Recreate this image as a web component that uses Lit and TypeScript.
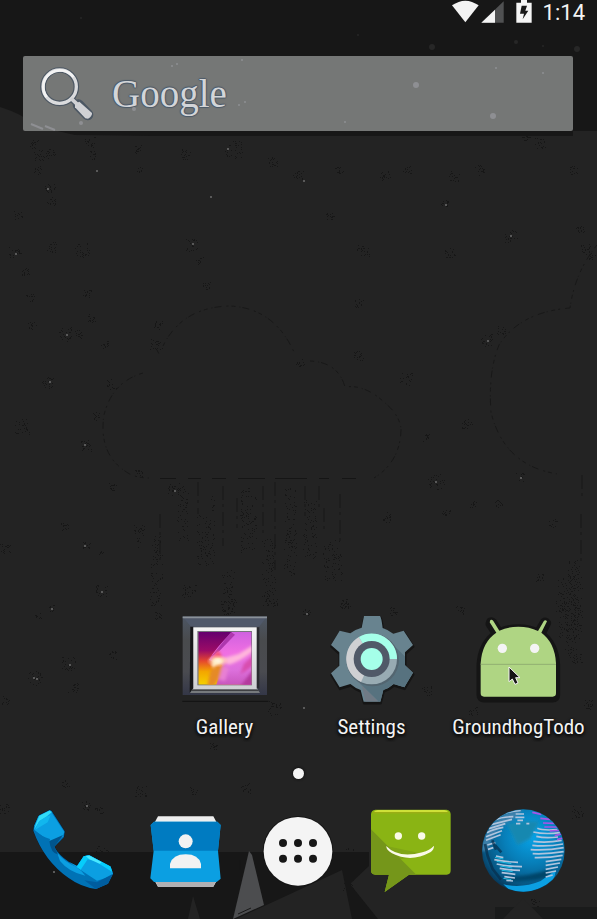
import { LitElement, html, css, svg } from "lit";
import { customElement } from "lit/decorators.js";

/* ---------- wallpaper data ---------- */

// [x, y, radius] of the dark grain clusters
const grain: number[][] = [
  [50, 189, 5], [51, 201, 4], [18, 215, 4], [15, 253, 6], [52, 247, 5], [82, 250, 7], [192, 245, 6], [199, 260, 4],
  [25, 272, 4], [30, 298, 4], [87, 293, 4], [206, 286, 4], [91, 318, 4], [32, 325, 4], [65, 334, 7], [78, 334, 4],
  [105, 344, 4], [158, 325, 4], [156, 345, 6], [48, 383, 6], [22, 426, 8], [85, 445, 6], [97, 416, 4], [111, 384, 5],
  [139, 473, 4], [112, 487, 4], [174, 489, 6], [65, 526, 4], [86, 545, 4], [5, 548, 5], [139, 530, 6], [101, 552, 2],
  [101, 590, 6], [51, 608, 3], [38, 615, 3], [158, 616, 4], [189, 591, 7], [112, 655, 4], [69, 664, 7], [35, 678, 7],
  [73, 688, 5], [5, 700, 4], [65, 784, 4], [141, 791, 6], [193, 791, 4], [86, 805, 5], [99, 811, 4], [4, 808, 5],
  [102, 851, 6], [34, 144, 4], [39, 155, 5], [51, 153, 5], [37, 170, 4], [93, 155, 4], [90, 142, 5], [139, 149, 4],
  [139, 170, 3], [186, 154, 5], [234, 149, 9], [272, 162, 5], [298, 175, 5], [339, 170, 4], [385, 176, 5], [407, 170, 4],
  [454, 176, 5], [480, 170, 5], [540, 143, 5], [573, 170, 4], [526, 137, 4], [300, 362, 4], [359, 356, 5], [406, 379, 6],
  [359, 303, 4], [386, 517, 5], [346, 604, 5], [393, 611, 4], [306, 613, 4], [445, 203, 4], [511, 236, 6], [580, 230, 4],
  [586, 249, 5], [592, 255, 4], [487, 340, 6], [501, 330, 4], [467, 424, 5], [426, 437, 4], [436, 481, 8], [520, 477, 4],
  [499, 504, 4], [473, 504, 3], [446, 511, 4], [553, 523, 4], [540, 577, 4], [460, 610, 4], [427, 691, 5], [587, 704, 5],
  [473, 711, 4], [272, 600, 6], [274, 708, 7], [213, 745, 4], [246, 788, 5], [349, 852, 4], [348, 885, 5], [577, 812, 6],
  [535, 903, 4], [229, 607, 8], [562, 606, 6], [575, 656, 7], [344, 605, 4], [450, 252, 5], [363, 250, 6], [330, 215, 4],
];

// [x, y, width, height] of the vertical streaks under the clouds
const rain: number[][] = [
  [150, 535, 12, 72], [177, 485, 11, 56], [197, 515, 18, 50], [211, 490, 4, 22], [222, 570, 13, 44], [240, 487, 16, 65],
  [262, 538, 13, 68], [284, 487, 12, 88], [303, 500, 13, 60], [323, 540, 19, 40], [558, 575, 24, 66], [565, 560, 14, 90],
  [137, 535, 5, 14],
];

const sparks: number[][] = [
  [47, 188], [15, 253], [66, 334], [49, 381], [84, 444], [84, 545], [101, 591], [51, 608], [69, 664], [33, 677],
  [36, 678], [174, 490], [192, 243], [210, 196], [227, 148], [510, 235], [445, 204], [487, 340], [435, 481],
  [520, 477], [306, 613], [303, 707], [86, 805], [53, 871], [96, 170], [303, 180],
];

const faint: number[][] = [
  [358, 35, 1], [432, 47, 3], [516, 42, 2], [543, 46, 1], [577, 49, 3], [81, 18, 1],
];

const speckle = (): string => {
  let seed = 11;
  const next = () => ((seed = (seed * 16807) % 2147483647) / 2147483647);
  let d = "";
  const dot = (x: number, y: number) => (d += `M${Math.round(x)} ${Math.round(y)}h1v1h-1z`);
  for (const [x, y, r] of grain) {
    for (let i = 0; i < r * 4; i++) dot(x + (next() * 2 - 1) * r, y + (next() * 2 - 1) * r);
  }
  for (const [x, y, w, h] of rain) {
    for (let i = 0; i < (w * h) / 10; i++) dot(x + next() * w, y + next() * h);
  }
  return d;
};

const wallpaper = svg`
  <svg class="wallpaper" viewBox="0 0 597 919" preserveAspectRatio="none" aria-hidden="true">
    <rect width="597" height="919" fill="#232323"/>
    <path d="M0 0H597V131H573V136H150L75 135Q40 128 20 115Q10 110 0 107Z" fill="#171717"/>
    <path d="M0 852H369V866L350 884L378 919H0Z" fill="#171717"/>
    <path d="M495 907H597V919H495Z" fill="#1a1b1b"/>
    <path d="M523 898L503 919H543Z" fill="#232323"/>
    <path d="M188 919L193 896L200 919Z" fill="#232323"/>
    <path d="M236 919L342 870L352 919Z" fill="#232323"/>
    <path d="M249 851L233 919L264 905L252 855Z" fill="#4c4d4f"/>
    <path d="M240 860v10M238 914L251 908" stroke="#171717"/>
    ${faint.map(([x, y, r]) => svg`<circle cx=${x} cy=${y} r=${r} fill="#272727"/>`)}
    <g fill="none" stroke="#181818" stroke-width="1" stroke-dasharray="4 4 1 2 7 5 2 3">
      <path d="M143 373Q112 382 104 415Q98 455 128 473Q136 478 150 478"/>
      <path d="M157 350L160 356M163 346Q182 307 230 306Q274 308 294 352"/>
      <path d="M310 361Q338 362 345 387Q365 384 385 403Q400 415 401 430Q400 462 374 478"/>
      <path d="M597 245Q575 272 570 308Q520 312 499 345Q488 372 491 412Q504 466 558 474"/>
    </g>
    <path d="M160 478.500h16M188 478.500h13M212 478.500h14M238 478.500h27M275 478.500h32M319 478.500h10M342 478.500h14" stroke="#151515" fill="none"/>
    <path d="M160 514v46M198 482v32M223 486v60M237 498v30M263 486v52M275 482v88M305 486v30M319 486v26M324 508v24M340 494v48M582 475v26M581 514v50" stroke="#181818" stroke-dasharray="14 4 3 5" fill="none"/>
    <path d=${speckle()} fill="#171717"/>
    ${sparks.map(([x, y]) => svg`<rect x=${x} y=${y} width="2" height="2" fill="#595959"/>`)}
  </svg>`;

/* ---------- status icons ---------- */

const wifi = svg`<svg class="wifi" viewBox="465 0 81 69" aria-label="Wi-Fi" role="img">
  <path d="M505 67L465 16Q505-12 545 16Z" fill="#f4f4f4"/></svg>`;
const signal = svg`<svg class="signal" viewBox="552 0 69 69" aria-label="Signal" role="img">
  <path d="M553 68L620 4V68Z" fill="#505152"/><path d="M553 68L594 29V68Z" fill="#f4f4f4"/></svg>`;
const battery = svg`<svg class="battery" viewBox="658 0 48 69" aria-label="Battery charging" role="img">
  <path d="M659 8H673V0H691V8H705V68H659Z" fill="#f4f4f4"/>
  <path d="M675 17H691L686 32H695L678 58L682 41H670Z" fill="#171717"/></svg>`;

/* ---------- application icons ---------- */

const magnifier = svg`<svg class="lens" viewBox="117 198 168 168" aria-hidden="true">
  <g stroke="#4c5763" fill="none"><circle cx="179" cy="260" r="50" stroke-width="17"/>
  <path d="M213 296L230 311" stroke-width="18"/><path d="M235 315L263 344" stroke-width="34" stroke-linecap="round"/></g>
  <circle cx="179" cy="260" r="50" fill="none" stroke="#dadbdd" stroke-width="10"/>
  <path d="M140 291A50 50 0 1 1 220 231" fill="none" stroke="#f3f3f3" stroke-width="8"/>
  <path d="M213 295L232 313" stroke="#d0d1d4" stroke-width="11"/>
  <path d="M225 311L238 305L276 339Q277 349 264 356L256 355L225 322Z" fill="#d0d1d4"/></svg>`;

const gallery = svg`<svg class="icon" viewBox="65 48 258 258" aria-hidden="true">
  <defs>
    <linearGradient id="sky" x1="0" y1="0" x2="0" y2="1"><stop offset="0" stop-color="#65006f"/><stop offset=".35" stop-color="#9b0b66"/><stop offset=".55" stop-color="#e5472e"/><stop offset=".75" stop-color="#f3a600"/><stop offset="1" stop-color="#f5d000"/></linearGradient>
    <linearGradient id="petal" x1="0" y1="0" x2="0" y2="1"><stop offset="0" stop-color="#cc5fe0"/><stop offset=".4" stop-color="#f06fe2"/><stop offset=".7" stop-color="#dc70dc"/><stop offset="1" stop-color="#c552b8"/></linearGradient>
    <linearGradient id="side" x1="0" y1="0" x2="0" y2="1"><stop offset="0" stop-color="#4d5664"/><stop offset=".3" stop-color="#494b4d"/><stop offset=".7" stop-color="#4a4b50"/><stop offset="1" stop-color="#343747"/></linearGradient>
    <linearGradient id="mat" x1="0" y1="0" x2="0" y2="1"><stop offset="0" stop-color="#f4f4f4"/><stop offset="1" stop-color="#cfd0d3"/></linearGradient>
    <radialGradient id="flare"><stop offset="0" stop-color="#fff"/><stop offset=".4" stop-color="#ffe6b5" stop-opacity=".9"/><stop offset="1" stop-color="#ffb0a0" stop-opacity="0"/></radialGradient>
    <filter id="soft"><feGaussianBlur stdDeviation="4"/></filter>
    <clipPath id="view"><rect x="114" y="96" width="159" height="158"/></clipPath>
  </defs>
  <path d="M66 304H324" stroke="#141414" stroke-width="4"/>
  <rect x="67" y="50" width="253" height="235" fill="url(#side)"/>
  <path d="M67 50H320L296 80H92Z" fill="#50596a"/><path d="M67 52H320" stroke="#8a9199" stroke-width="5"/>
  <path d="M90 80H99V266L88 278Z" fill="#171719"/><path d="M288 82H297V266L288 262Z" fill="#292a2e"/>
  <path d="M99 264H290L299 279H89Z" fill="#777a7d"/><path d="M93 271H295" stroke="#343638" stroke-width="3"/>
  <rect x="99" y="82" width="190" height="185" fill="url(#mat)"/>
  <rect x="111" y="93" width="164" height="163" fill="#77767c"/>
  <g clip-path="url(#view)">
    <rect x="114" y="96" width="159" height="158" fill="url(#sky)"/>
    <path d="M215 90H285V262H165L175 230L185 195L146 180Q165 145 215 96Z" fill="url(#petal)"/>
    <path d="M212 96L148 176Q165 160 178 152L224 104Z" fill="#ad38ae"/>
    <g filter="url(#soft)">
      <path d="M172 150Q158 165 148 184L180 186Q190 165 172 150Z" fill="#f4577c"/>
      <path d="M280 134L235 162Q205 170 178 177L205 194Q240 184 280 152Z" fill="#ffb6dc"/>
      <path d="M280 165L250 192L240 222L255 214L280 196Z" fill="#d84daf"/>
      <path d="M280 206L238 262H280Z" fill="#b43a9e"/>
      <path d="M168 190Q200 190 190 214L158 262H140L150 215Z" fill="#e58a26"/>
      <path d="M186 198L206 203L194 243L176 238Z" fill="#e880d3"/>
    </g>
    <ellipse cx="172" cy="183" rx="34" ry="20" fill="url(#flare)"/>
    <path d="M153 194L168 178L187 180Q169 188 159 205Z" fill="#fff1cc" filter="url(#soft)"/>
  </g></svg>`;

const gear = "M161 48H209Q213 52 217 84Q235 90 249 101L280 92L308 135L284 157V196L308 218L282 262L250 252Q237 264 219 270L210 305H160L151 270Q134 264 120 252L88 262L62 220L87 197V157L62 135L88 92L120 100Q137 87 154 83Z";
const settings = svg`<svg class="icon" viewBox="56 48 258 258" aria-hidden="true">
  <defs><clipPath id="gear"><path d=${gear}/></clipPath></defs>
  <path d=${gear} transform="translate(1 5)" fill="#151515" stroke="#151515" stroke-width="7" stroke-linejoin="round"/>
  <path d=${gear} fill="#68838f"/>
  <g clip-path="url(#gear)"><path d="M238 124L320 205V310H210L130 232Z" fill="#57727f"/><path d="M128 230L155 258L165 305H205Z" fill="#707a85"/></g>
  <circle cx="187" cy="180" r="79" fill="#536570"/>
  <circle cx="184" cy="177" r="76" fill="#98abb3"/>
  <path d="M184 177L146 111A76 76 0 0 0 152 246Z" fill="#cfd0d3"/>
  <path d="M184 177L146 111A76 76 0 0 1 260 177Z" fill="#a5ffe9"/>
  <circle cx="184" cy="177" r="54" fill="#505968"/><circle cx="184" cy="177" r="33" fill="#a5ffe9"/></svg>`;

const droid = "M151 60Q156 58 160 63L178 92Q205 80 235 80Q268 80 294 93L312 62Q317 58 321 64L304 98Q345 128 348 190V280Q348 290 338 290H132Q122 290 122 280V190Q126 126 169 98L149 67Z";
const groundhog = svg`<svg class="icon" viewBox="108 48 258 258" aria-hidden="true">
  <path d=${droid} transform="translate(0 5)" fill="#151515" stroke="#151515" stroke-width="25" stroke-linejoin="round"/>
  <path d=${droid} fill="#afd583"/><path d="M122 193H348" stroke="#91af72" stroke-width="3"/>
  <circle cx="187" cy="145" r="14" fill="#f4f4f4"/><circle cx="284" cy="145" r="14" fill="#f4f4f4"/></svg>`;

const pointer = svg`<svg class="pointer" viewBox="201 198 39 57" aria-hidden="true">
  <path d="M204 201V245L214 237L222 253L231 249L224 233H237Z" fill="#151515" stroke="#f2f2f2" stroke-width="3"/></svg>`;

const phone = svg`<svg class="icon" viewBox="94 147 252 252" aria-hidden="true">
  <path d="M150 150L156 153L195 214L193 231L164 260Q176 284 208 306L232 318L252 289L268 285L333 320L340 342L325 371L289 387Q244 381 207 354Q133 302 101 212L103 197L118 166Z" fill="#0073b8" stroke="#101820" stroke-width="3" paint-order="stroke"/>
  <path d="M116 169L151 151L194 216L189 230L151 245L104 210L105 196Z" fill="#0b9fe2"/>
  <path d="M109 191L119 167L149 152L157 156L139 171L119 184L103 209Z" fill="#31dcf7"/>
  <path d="M118 184L138 171L153 166L144 187L107 209Z" fill="#11b7ee"/>
  <path d="M104 210Q125 230 151 237Q143 260 163 280Q198 326 258 344L289 360L286 385Q236 374 201 345Q132 293 104 210Z" fill="#0072b5"/>
  <path d="M149 243L190 225L164 260L176 284Q153 280 149 243Z" fill="#00558d"/>
  <path d="M173 279Q197 308 229 320L245 333L257 347Q208 337 181 303Z" fill="#0b9fe2"/>
  <path d="M208 306L232 318L252 289L268 285L333 320L340 341L330 350L292 362L244 331Z" fill="#0b9fe2"/>
  <path d="M252 289L268 286L332 319L338 336L284 302L264 298L243 329L231 321Z" fill="#06cdfb"/>
  <path d="M258 288L270 287L306 307L300 311L269 298Z" fill="#49e8ff"/>
  <path d="M254 361L292 367L339 342L325 371L289 387Z" fill="#005d9f"/></svg>`;

const contacts = svg`<svg class="icon" viewBox="432 147 252 252" aria-hidden="true">
  <path d="M474 169H640L648 184V366L640 380H474L466 366V184Z" fill="#eee"/>
  <path d="M466 362H648L640 380H474Z" fill="#b0b0b3"/>
  <path d="M462 185H652L662 195L654 272L662 356L650 366H462L451 355L461 272L452 195Z" fill="#0b9fe2"/>
  <path d="M462 185H652L662 195L654 272H461L452 195Z" fill="#007bc1"/>
  <circle cx="557" cy="244" r="21" fill="#f2f2f2"/>
  <path d="M510 325V312Q518 283 557 283Q596 283 603 312V325Z" fill="#f2f2f2"/></svg>`;

const drawer = svg`<svg class="icon" viewBox="78 147 252 252" aria-hidden="true">
  <circle cx="204" cy="274" r="106" fill="#151515"/><circle cx="204" cy="274" r="103" fill="#f4f4f4"/>
  ${[159, 204, 249].map((x) => [249, 296].map((y) => svg`<circle cx=${x} cy=${y} r="12" fill="#171717"/>`))}</svg>`;

const messaging = svg`<svg class="icon" viewBox="36 57 252 252" aria-hidden="true">
  <path d="M55 59H269Q281 61 281 73V241Q281 254 269 254H156L83 306L96 254H55Q42 254 42 241V73Q42 61 55 59Z" fill="#8ab414"/>
  <path d="M42 118L178 254H156L83 306L96 254H55Q42 254 42 241Z" fill="#75961a"/>
  <path d="M88 168L110 208Q160 206 199 194L182 188Z" fill="#75961a" opacity=".5"/>
  <path d="M50 67Q54 61 62 61H262Q270 61 275 68Z" fill="#e2f045"/><path d="M48 68H275" stroke="#9aae14" stroke-width="5"/>
  <circle cx="124" cy="138" r="11" fill="#fafae8"/><circle cx="194" cy="138" r="11" fill="#fafae8"/>
  <path d="M88 168Q125 207 196 187Q218 181 231 167Q231 179 220 187Q161 219 105 190Q87 180 88 168Z" fill="#fafae8"/></svg>`;

const browser = svg`<svg class="icon" viewBox="374 57 252 252" aria-hidden="true">
  <defs>
    <radialGradient id="sea" cx=".6" cy=".32" r=".75"><stop offset="0" stop-color="#08a4e8"/><stop offset=".45" stop-color="#077eb8"/><stop offset=".8" stop-color="#075683"/><stop offset="1" stop-color="#062c49"/></radialGradient>
    <filter id="haze"><feGaussianBlur stdDeviation="5"/></filter>
    <clipPath id="globe"><circle cx="498" cy="182" r="123"/></clipPath>
  </defs>
  <circle cx="498" cy="182" r="124" fill="url(#sea)"/>
  <g clip-path="url(#globe)" fill="none">
    <g filter="url(#haze)">
      <path d="M368 182Q394 70 498 54L474 85Q410 110 390 182Z" fill="#3c80aa"/>
      <path d="M450 103Q480 90 545 95L519 146L480 165Z" fill="#1688b0"/>
      <path d="M442 260Q510 262 580 238L570 262Q510 280 440 270Z" fill="#064569"/>
    </g>
    <path d="M438 283Q495 296 550 273L596 240L590 268Q522 322 460 304Z" fill="#0b9fe2"/>
    <g stroke="#afc4dd" stroke-width="5">
      <path d="M426 78Q450 63 490 61M410 91Q433 80 468 80M401 104L464 88M395 116L444 101M389 128Q407 117 438 112M386 140L434 122M386 151L430 134M390 165L414 158M392 178L408 173"/>
      <path d="M475 72h25M474 82h27M480 91h17M476 101h13M507 101h9"/>
      <path d="M540 115Q555 122 600 119M528 126Q560 134 608 128M537 139Q563 146 602 141M528 154Q567 160 613 151M525 166Q569 171 617 162M520 179Q570 182 619 173M526 191Q572 193 619 185M532 203Q576 204 616 196M565 215L612 208M565 226L608 219M565 238L602 231M565 249L596 243M565 261L586 255"/>
      <path d="M416 198L438 203M411 209Q443 216 482 217M418 222Q453 230 494 230M427 235Q460 241 488 241M433 248L474 253M441 260L473 264M447 271L467 273"/>
    </g>
    <g stroke="#a853e8" stroke-width="5"><path d="M525 67L552 73M549 85L579 88M557 99L592 100M561 111L603 111M577 123L608 121M592 137L613 132M599 149L616 144"/></g>
    <g stroke="#21bde4" stroke-width="3"><path d="M413 202L438 207M418 214L462 221M429 228L465 234M433 241L466 245M438 265L462 269"/></g>
    <g stroke="#072e4c" stroke-width="8" opacity=".7"><path d="M383 162L391 198L406 237L431 269M413 165L432 187M405 151L416 179"/></g>
  </g></svg>`;

const apps = [
  { name: "Gallery", art: gallery },
  { name: "Settings", art: settings },
  { name: "GroundhogTodo", art: groundhog },
];
const dock = [
  { name: "Phone", art: phone },
  { name: "Contacts", art: contacts },
  { name: "Apps", art: drawer },
  { name: "Messaging", art: messaging },
  { name: "Browser", art: browser },
];

@customElement("app-root")
export class AppRoot extends LitElement {
  static styles = css`
    :host {
      display: flex;
      flex-direction: column;
      position: relative;
      box-sizing: border-box;
      min-height: 100vh;
      padding-bottom: 26px;
      overflow: hidden;
      background: #232323;
      color: #f4f4f4;
      font-family: Roboto, "Noto Sans", sans-serif;
    }
    button {
      padding: 0;
      border: 0;
      background: none;
      color: inherit;
      font: inherit;
      cursor: pointer;
    }
    svg { display: block; }
    .wallpaper { position: absolute; inset: 0; width: 100%; height: 100%; }
    .status, .search, .apps, .pages, .dock { position: relative; }
    .status {
      display: flex;
      justify-content: flex-end;
      height: 24px;
      padding-right: 12px;
    }
    .wifi { width: 27px; height: 23px; margin-right: 2px; }
    .signal { width: 23px; height: 23px; margin-right: 12px; }
    .battery { width: 16px; height: 23px; margin-right: 11px; }
    .clock { font-size: 22px; line-height: 25px; }
    .search {
      display: flex;
      align-items: center;
      height: 75px;
      margin: 32px 24px 0 23px;
      padding-left: 16px;
      border-radius: 2px;
      background: #757776;
      overflow: hidden;
    }
    .lens { width: 56px; height: 56px; }
    .brand {
      margin-left: 17px;
      color: #d3d5d8;
      font: 39px/48px "Liberation Serif", serif;
      text-shadow: 1px 0 1px #4c5a6a, -1px 0 1px #4c5a6a, 0 1px 1px #4c5a6a, 0 -1px 1px #4c5a6a;
    }
    .flecks { position: absolute; inset: 0; width: 100%; height: 100%; }
    .apps {
      display: grid;
      grid-template-columns: repeat(4, 1fr);
      margin-top: auto;
      padding: 0 5px 0 4px;
    }
    .app { display: flex; flex-direction: column; align-items: center; min-width: 0; }
    .app:first-child { grid-column-start: 2; }
    .art { position: relative; width: 86px; height: 86px; }
    .icon { width: 100%; height: 100%; overflow: visible; }
    .pointer { position: absolute; left: 32px; top: 50px; width: 13px; height: 19px; }
    .label {
      margin-top: 12px;
      font-family: "Roboto Condensed", "Liberation Sans Narrow", Roboto, sans-serif;
      font-size: 21px;
      line-height: 26px;
      white-space: nowrap;
      text-shadow: 0 2px 2px #101010, 1px 1px 3px #101010, -1px 1px 3px #101010;
    }
    .pages { display: flex; justify-content: center; margin: 28px 0 30px; }
    .page { width: 11px; height: 11px; border-radius: 50%; background: #f4f4f4; box-shadow: 0 0 2px 1px #151515; }
    .dock {
      display: grid;
      grid-template-columns: repeat(5, 1fr);
      justify-items: center;
      padding: 0 17px;
    }
    .launcher { width: 84px; height: 84px; }
  `;

  render() {
    return html`
      ${wallpaper}
      <header class="status">
        ${wifi}${signal}${battery}
        <time class="clock">1:14</time>
      </header>
      <button class="search">
        <svg class="flecks" viewBox="0 0 550 75" preserveAspectRatio="none" aria-hidden="true">
          <g fill="#8e8f93">
            <circle cx="393" cy="29" r="3"/><circle cx="470" cy="60" r="3"/><circle cx="149" cy="10" r="1"/>
            <circle cx="154" cy="8" r="1"/><circle cx="216" cy="49" r="1"/><circle cx="222" cy="46" r="1"/>
            <circle cx="322" cy="66" r="1"/><circle cx="473" cy="12" r="1"/><circle cx="520" cy="17" r="1"/>
            <circle cx="58" cy="67" r="2"/><circle cx="111" cy="53" r="2"/><circle cx="219" cy="4" r="1"/>
            <path d="M8 68L20 73M22 70L32 74" stroke="#8e8f93" stroke-width="2"/>
          </g>
        </svg>
        ${magnifier}<span class="brand">Google</span>
      </button>
      <main class="apps">
        ${apps.map(
          ({ name, art }) => html`<button class="app">
            <span class="art">${art}${name === "GroundhogTodo" ? pointer : ""}</span>
            <span class="label">${name}</span>
          </button>`
        )}
      </main>
      <div class="pages"><span class="page"></span></div>
      <nav class="dock">
        ${dock.map(({ name, art }) => html`<button class="launcher" aria-label=${name}>${art}</button>`)}
      </nav>
    `;
  }
}
